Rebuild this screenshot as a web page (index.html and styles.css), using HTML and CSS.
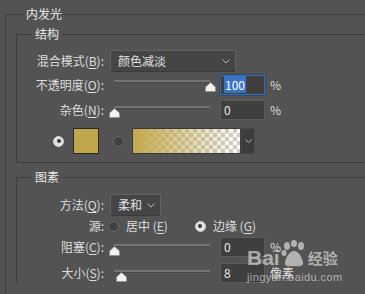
FILE: index.html
```html
<!DOCTYPE html>
<html lang="zh-CN">
<head>
    <meta charset="UTF-8">
    <meta name="viewport" content="width=device-width, initial-scale=1.0">
    <title>内发光</title>
    <link rel="stylesheet" href="styles.css">
</head>
<body>
    <fieldset class="group outer">
        <legend>内发光</legend>

        <fieldset class="group">
            <legend>结构</legend>
            <div class="row r-blend">
                <label>混合模式(<u>B</u>):</label>
                <div class="select wide">
                    <span>颜色减淡</span>
                    <svg class="chev" width="8" height="5" viewBox="0 0 8 5"><polyline points="0.5,0.5 4,4 7.5,0.5"/></svg>
                </div>
            </div>
            <div class="row r-opacity">
                <label>不透明度(<u>O</u>):</label>
                <div class="slider" style="--v:100">
                    <div class="track"></div>
                    <svg class="thumb" width="11" height="10" viewBox="0 0 11 10"><path d="M5.5 0.5 L10.5 5 L10.5 9.5 L0.5 9.5 L0.5 5 Z"/></svg>
                </div>
                <div class="field focus"><span class="sel">100</span></div>
                <span class="unit">%</span>
            </div>
            <div class="row r-noise">
                <label>杂色(<u>N</u>):</label>
                <div class="slider" style="--v:0">
                    <div class="track"></div>
                    <svg class="thumb" width="11" height="10" viewBox="0 0 11 10"><path d="M5.5 0.5 L10.5 5 L10.5 9.5 L0.5 9.5 L0.5 5 Z"/></svg>
                </div>
                <div class="field">0</div>
                <span class="unit">%</span>
            </div>
            <div class="color-row">
                <span class="radio on"></span>
                <span class="swatch"></span>
                <span class="radio"></span>
                <div class="gradient">
                    <span class="grad-fill"></span>
                    <span class="grad-btn">
                        <svg class="chev" width="7" height="4" viewBox="0 0 7 4"><polyline points="0.5,0.5 3.5,3.5 6.5,0.5"/></svg>
                    </span>
                </div>
            </div>
        </fieldset>

        <fieldset class="group second">
            <legend>图素</legend>
            <div class="row r-method">
                <label>方法(<u>Q</u>):</label>
                <div class="select narrow">
                    <span>柔和</span>
                    <svg class="chev" width="8" height="5" viewBox="0 0 8 5"><polyline points="0.5,0.5 4,4 7.5,0.5"/></svg>
                </div>
            </div>
            <div class="row r-source">
                <label>源:</label>
                <span class="radio small"></span>
                <span class="opt">居中 (<u>E</u>)</span>
                <span class="radio small on"></span>
                <span class="opt">边缘 (<u>G</u>)</span>
            </div>
            <div class="row r-choke">
                <label>阻塞(<u>C</u>):</label>
                <div class="slider" style="--v:0">
                    <div class="track"></div>
                    <svg class="thumb" width="11" height="10" viewBox="0 0 11 10"><path d="M5.5 0.5 L10.5 5 L10.5 9.5 L0.5 9.5 L0.5 5 Z"/></svg>
                </div>
                <div class="field">0</div>
                <span class="unit">%</span>
            </div>
            <div class="row r-size">
                <label>大小(<u>S</u>):</label>
                <div class="slider" style="--v:8">
                    <div class="track"></div>
                    <svg class="thumb" width="11" height="10" viewBox="0 0 11 10"><path d="M5.5 0.5 L10.5 5 L10.5 9.5 L0.5 9.5 L0.5 5 Z"/></svg>
                </div>
                <div class="field">8</div>
                <span class="unit">像素</span>
            </div>
        </fieldset>
    </fieldset>

    <!-- watermark from the screenshot source -->
    <div class="watermark">
        <div class="wm-logo">
            <span class="wm-bai">Bai</span>
            <svg class="wm-paw" width="26" height="28" viewBox="0 0 26 28">
                <ellipse cx="6" cy="6" rx="3" ry="4"/>
                <ellipse cx="13" cy="3.5" rx="3" ry="3.5"/>
                <ellipse cx="20" cy="6" rx="3" ry="4"/>
                <ellipse cx="3" cy="13" rx="2.5" ry="3"/>
                <path d="M13 11 C8 11 5 18 4 22 C3 26 7 27 13 26 C19 27 23 26 22 22 C21 18 18 11 13 11 Z"/>
            </svg>
            <span class="wm-jy">经验</span>
        </div>
        <div class="wm-url">jingyan.baidu.com</div>
    </div>
</body>
</html>
```

FILE: styles.css
```css
html, body {
    margin: 0;
    overflow: hidden;
}
body {
    background: #535353;
    color: #dcdcdc;
    font-family: "Noto Sans CJK SC", "Noto Sans", sans-serif;
    font-size: 12px;
    line-height: 16px;
    width: 365px;
    height: 294px;
    position: relative;
}
u {
    text-decoration: underline;
    text-underline-offset: 2px;
}

.group {
    border: 1px solid #3e3e3e;
    border-right: none;
    margin: 0;
    padding: 0 0 8px 0;
    min-width: 0;
}
.group legend {
    padding: 0 3px;
    margin-left: 15px;
    line-height: 16px;
    color: #e6e6e6;
}
.outer {
    margin: 6px 0 0 5px;
    padding: 4px 0 0 10px;
    box-sizing: border-box;
    width: 360px;
    height: 288px;
    border-bottom: none;
}
.outer > legend {
    margin-left: 7px;
}
.group .group {
    padding-top: 8px;
}
.second {
    margin-top: 6px;
    padding-top: 9px !important;
    padding-bottom: 0;
    border-bottom: none;
}

.row {
    display: flex;
    align-items: center;
}
.row label {
    width: 87px;
    text-align: right;
    margin-right: 6px;
    white-space: nowrap;
}
.r-blend, .r-method { height: 22px; }
.r-blend { margin-bottom: 3px; }
.r-opacity { height: 20px; margin-bottom: 5px; }
.r-noise { height: 20px; margin-bottom: 8px; }
.r-method { margin-bottom: 2px; }
.r-source { height: 16px; margin-bottom: 3px; }
.r-source label { margin-right: 4px; }
.r-choke { height: 20px; margin-bottom: 6px; }
.r-size { height: 20px; }

.select {
    height: 22px;
    box-sizing: border-box;
    background: #454545;
    border: 1px solid #626262;
    border-bottom-color: #3a3a3a;
    display: flex;
    align-items: center;
    justify-content: space-between;
    padding: 0 5px 0 7px;
    color: #e2e2e2;
}
.select.wide { width: 126px; }
.select.narrow { width: 51px; }
.chev {
    fill: none;
    stroke: #b8b8b8;
    stroke-width: 1;
}

.slider {
    width: 104px;
    height: 20px;
    position: relative;
    margin-right: 6px;
}
.track {
    margin: 6px 4px 0;
    height: 2px;
    background: #737373;
    border-bottom: 1px solid #474747;
}
.thumb {
    position: absolute;
    top: 8px;
    left: calc(4px + var(--v) * 0.96px - 5.5px);
    fill: #f2f2f2;
    stroke: #8a8a8a;
    stroke-width: 0.6;
}
.r-opacity .track { margin-top: 5px; }
.r-opacity .thumb { top: 7px; }
.second .track { margin-top: 7px; }
.second .thumb { top: 9px; }

.field {
    width: 45px;
    height: 20px;
    box-sizing: border-box;
    background: #3f3f3f;
    border: 1px solid #5b5b5b;
    padding-left: 3px;
    line-height: 18px;
    color: #e4e4e4;
}
.field.focus {
    border-color: #3b6ea6;
    box-shadow: 0 0 0 1px #2f4a6a;
}
.sel {
    background: #3a74c8;
    color: #ffffff;
    padding: 0 1px;
}
.unit {
    margin-left: 5px;
}

.color-row {
    height: 26px;
    display: flex;
    align-items: center;
    padding-left: 36px;
}
.radio {
    width: 11px;
    height: 11px;
    box-sizing: border-box;
    border-radius: 50%;
    background: #404040;
    border: 1px solid #6d6d6d;
    display: inline-flex;
    align-items: center;
    justify-content: center;
}
.radio.on {
    background: #e4e4e4;
    border-color: #d0d0d0;
}
.radio.on::after {
    content: "";
    width: 4px;
    height: 4px;
    border-radius: 50%;
    background: #3a3a3a;
}
.color-row .radio:first-child { margin-right: 9px; }
.swatch {
    width: 26px;
    height: 26px;
    box-sizing: border-box;
    background: #c1a74b;
    border: 1px solid #2d2a22;
    margin-right: 14px;
}
.color-row .radio:nth-child(3) { margin-right: 8px; }
.gradient {
    display: flex;
    height: 26px;
}
.grad-fill {
    width: 109px;
    height: 26px;
    box-sizing: border-box;
    border: 1px solid #3a3a3a;
    background:
        linear-gradient(to right, #c3a84c, rgba(195, 168, 76, 0)),
        conic-gradient(#cdcdcd 25%, #ffffff 0 50%, #cdcdcd 0 75%, #ffffff 0) 0 0 / 8px 8px;
}
.grad-btn {
    width: 14px;
    height: 26px;
    box-sizing: border-box;
    background: #3c3c3c;
    border: 1px solid #4a4a4a;
    display: flex;
    align-items: center;
    justify-content: center;
}

.r-source .radio { margin-right: 7px; }
.r-source .opt:nth-of-type(2) { margin-right: 27px; }

.watermark {
    position: absolute;
    left: 247px;
    top: 240px;
    color: rgba(255, 255, 255, 0.55);
    pointer-events: none;
}
.wm-logo {
    display: flex;
    align-items: flex-end;
    height: 28px;
}
.wm-bai {
    font-family: "Liberation Sans", sans-serif;
    font-weight: bold;
    font-size: 21px;
    line-height: 20px;
}
.wm-paw {
    fill: rgba(255, 255, 255, 0.55);
    margin: 0 1px 0 1px;
}
.wm-jy {
    font-weight: bold;
    font-size: 15px;
    line-height: 20px;
}
.wm-url {
    font-family: "Liberation Sans", sans-serif;
    font-size: 11px;
    line-height: 14px;
    letter-spacing: 0.4px;
    margin-top: 2px;
}
```
